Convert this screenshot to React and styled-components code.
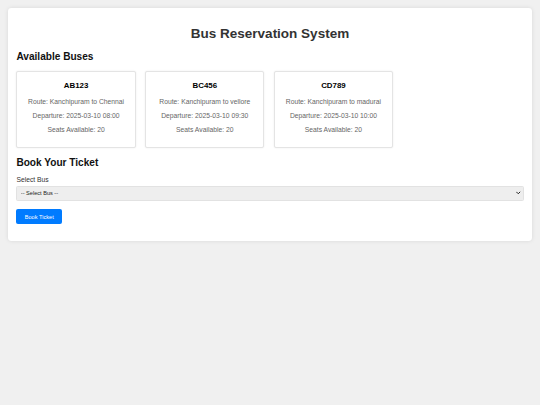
import React from 'react';
import styled, { createGlobalStyle } from 'styled-components';

const GlobalStyle = createGlobalStyle`
	html, body {
		margin: 0;
		padding: 0;
	}
	body {
		padding: 8px;
		background-color: #f0f0f0;
		font-family: 'Liberation Sans', Arial, sans-serif;
	}
`;

const Wrapper = styled.div`
	background-color: #fff;
	padding: 9.4px 8.4px 8.4px;
	border-radius: 3.4px;
	box-shadow: 0 0 4px rgba(0, 0, 0, 0.1);
`;

const Title = styled.h1`
	text-align: center;
	color: #333;
	font-size: 13.5px;
	margin: 9px 0 10px;
`;

const SectionTitle = styled.h2`
	font-size: 10.1px;
	color: #111;
	margin: 8.4px 0;
`;

const BusList = styled.div`
	display: flex;
	flex-wrap: wrap;
	gap: 9.3px;
`;

const BusCard = styled.div`
	box-sizing: border-box;
	width: 119.4px;
	padding: 4.6px 6px 7px;
	border: 1px solid #e4e4e4;
	border-radius: 2px;
	background-color: #fff;
	box-shadow: 0 0 2px rgba(0, 0, 0, 0.08);
	text-align: center;
`;

const BusNumber = styled.h3`
	font-size: 7.9px;
	color: #000;
	margin: 5px 0 7.8px;
`;

const BusInfo = styled.p`
	font-size: 6.75px;
	color: #666;
	margin: 7px 0;
`;

const Form = styled.form`
	padding-bottom: 8.4px;
`;

const Label = styled.label`
	display: block;
	font-size: 6.75px;
	color: #333;
	margin-bottom: 3.2px;
`;

const SelectWrap = styled.div`
	position: relative;
`;

const Select = styled.select`
	display: block;
	box-sizing: border-box;
	width: 100%;
	height: 14.7px;
	padding: 0 3.4px;
	font-family: 'Liberation Sans', Arial, sans-serif;
	font-size: 5.6px;
	color: #222;
	background-color: #eee;
	border: 0.5px solid #e2e2e2;
	border-radius: 1.5px;
	appearance: none;
	-webkit-appearance: none;
`;

const Chevron = styled.svg`
	position: absolute;
	right: 3px;
	top: 50%;
	transform: translateY(-50%);
	width: 4.5px;
	height: 3.5px;
	pointer-events: none;
`;

const Button = styled.button`
	display: block;
	margin-top: 8.6px;
	padding: 4.2px 8.4px;
	font-family: 'Liberation Sans', Arial, sans-serif;
	font-size: 5.6px;
	color: #fff;
	background-color: #007bff;
	border: none;
	border-radius: 2px;
`;

const buses = [
	{ number: 'AB123', route: 'Kanchipuram to Chennai', departure: '2025-03-10 08:00', seats: 20 },
	{ number: 'BC456', route: 'Kanchipuram to vellore', departure: '2025-03-10 09:30', seats: 20 },
	{ number: 'CD789', route: 'Kanchipuram to madurai', departure: '2025-03-10 10:00', seats: 20 },
];

const App = () => {
	return (
		<>
			<GlobalStyle />
			<Wrapper>
				<Title>Bus Reservation System</Title>

				<SectionTitle>Available Buses</SectionTitle>
				<BusList>
					{buses.map((bus) => (
						<BusCard key={bus.number}>
							<BusNumber>{bus.number}</BusNumber>
							<BusInfo>Route: {bus.route}</BusInfo>
							<BusInfo>Departure: {bus.departure}</BusInfo>
							<BusInfo>Seats Available: {bus.seats}</BusInfo>
						</BusCard>
					))}
				</BusList>

				<SectionTitle>Book Your Ticket</SectionTitle>
				<Form onSubmit={(e) => e.preventDefault()}>
					<Label htmlFor="bus">Select Bus</Label>
					<SelectWrap>
						<Select id="bus" defaultValue="">
							<option value="">-- Select Bus --</option>
							{buses.map((bus) => (
								<option key={bus.number} value={bus.number}>
									{bus.number}
								</option>
							))}
						</Select>
						<Chevron viewBox="0 0 9 7">
							<path d="M0.5 1 L4.5 5 L8.5 1" fill="none" stroke="#222" strokeWidth="2" />
						</Chevron>
					</SelectWrap>
					<Button type="submit">Book Ticket</Button>
				</Form>
			</Wrapper>
		</>
	);
};

export default App;
